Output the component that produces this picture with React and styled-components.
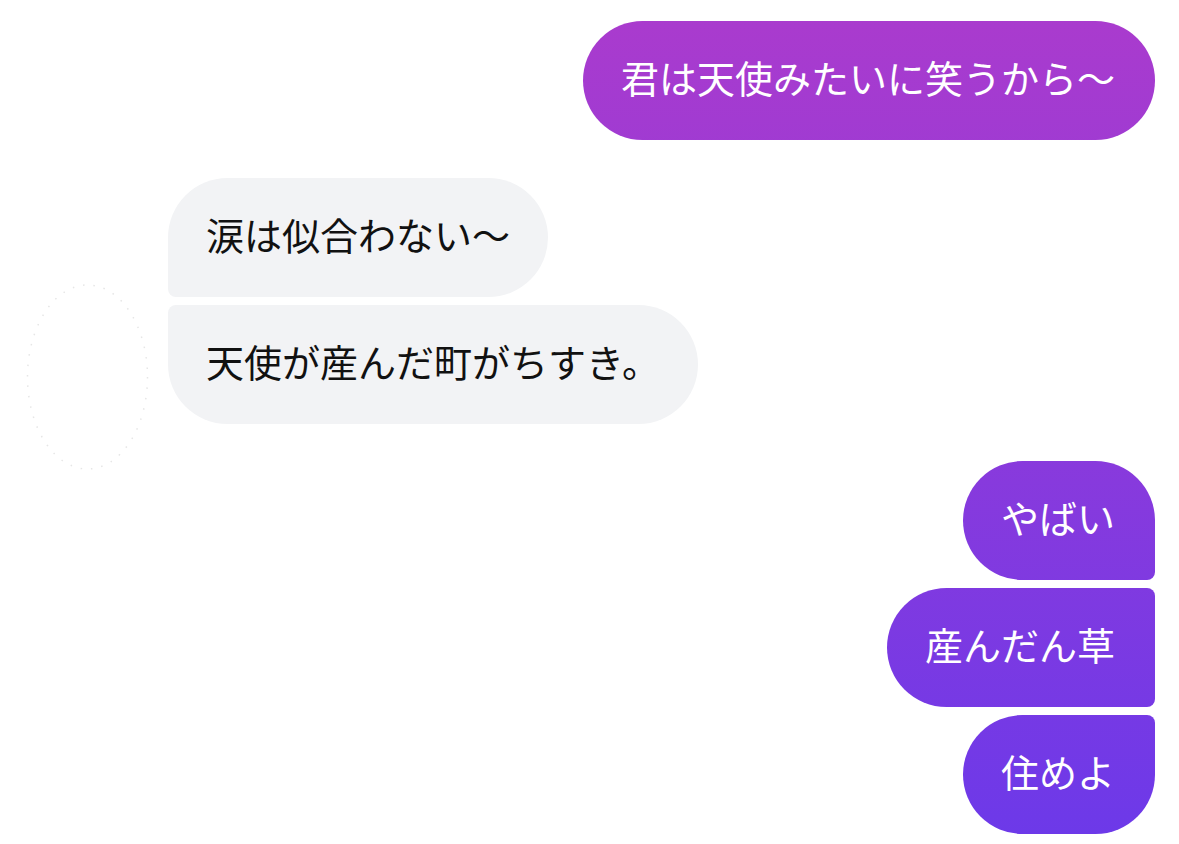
import React from 'react';
import styled, { createGlobalStyle, css } from 'styled-components';

const GlobalStyle = createGlobalStyle`
  html, body {
    margin: 0;
    padding: 0;
    background: #ffffff;
  }
  body {
    font-family: "Noto Sans CJK JP", "Noto Sans", sans-serif;
  }
`;

const FULL = '60px';
const TIGHT = '8px';

// corner shapes for a bubble depending on where it sits in its group
const corners = (side, pos) => {
  if (pos === 'single') return css`border-radius: ${FULL};`;
  const near = side === 'out' ? 'right' : 'left';
  const top = pos === 'first' ? FULL : TIGHT;
  const bottom = pos === 'last' ? FULL : TIGHT;
  return css`
    border-radius: ${FULL};
    border-top-${near}-radius: ${top};
    border-bottom-${near}-radius: ${bottom};
  `;
};

const Thread = styled.div`
  display: flex;
  flex-direction: column;
  padding: 21px 24px 0 25px;
  width: 1179px;
  box-sizing: border-box;
`;

const OutGroup = styled.div`
  align-self: flex-end;
  display: flex;
  flex-direction: column;
  align-items: flex-end;
  gap: 8px;
  margin-top: ${p => p.$space || 0}px;
`;

const InRow = styled.div`
  display: flex;
  align-items: flex-end;
  gap: 18px;
  margin-top: ${p => p.$space || 0}px;
`;

const InGroup = styled.div`
  display: flex;
  flex-direction: column;
  align-items: flex-start;
  gap: 8px;
`;

const Avatar = styled.svg`
  flex: none;
  width: 125px;
  height: 190px;
  margin-bottom: -48px;
`;

const Bubble = styled.div`
  box-sizing: border-box;
  height: 119px;
  padding: 32px ${p => (p.$side === 'out' ? 40 : 38)}px 40px 38px;
  font-size: 38px;
  line-height: 47px;
  white-space: nowrap;
  ${p => p.$side === 'out'
    ? css`
      color: #ffffff;
      background: linear-gradient(180deg, #ab3bcd 0px, #6c39e9 844px);
      background-attachment: fixed;
    `
    : css`
      color: #111111;
      background: #f2f3f5;
    `}
  ${p => corners(p.$side, p.$pos)}
`;

export default function App() {
  return (
    <>
      <GlobalStyle />
      <Thread>
        <OutGroup>
          <Bubble $side="out" $pos="single">君は天使みたいに笑うから～</Bubble>
        </OutGroup>

        <InRow $space={38}>
          <Avatar viewBox="0 0 125 190">
            <ellipse cx="62.5" cy="95" rx="60" ry="92" fill="none" stroke="#e6e6e6" strokeWidth="1.5" strokeDasharray="1.5 9" />
          </Avatar>
          <InGroup>
            <Bubble $side="in" $pos="first">涙は似合わない～</Bubble>
            <Bubble $side="in" $pos="last">天使が産んだ町がちすき。</Bubble>
          </InGroup>
        </InRow>

        <OutGroup $space={37}>
          <Bubble $side="out" $pos="first">やばい</Bubble>
          <Bubble $side="out" $pos="middle">産んだん草</Bubble>
          <Bubble $side="out" $pos="last">住めよ</Bubble>
        </OutGroup>
      </Thread>
    </>
  );
}
